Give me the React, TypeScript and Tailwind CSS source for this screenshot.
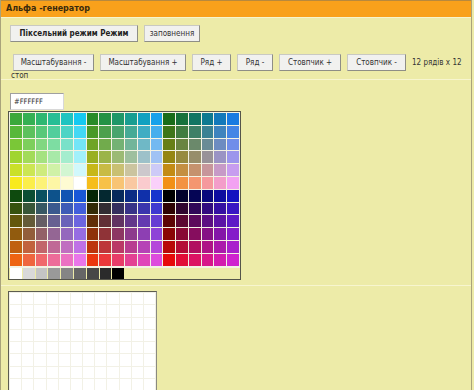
import React from "react";

const levels = [0, 0x33, 0x66, 0x99, 0xcc, 0xff];

function tone(r: number, g0: number, b: number) {
  const greenness = Math.max(0, g0 - Math.max(r, b)) / 255;
  const blueness = Math.max(0, b - g0) / 255;
  const g = g0 - 0.18 * g0 * (1 - Math.min(r, b) / 255) * (1 - 0.6 * (r / 255));
  const L = 0.299 * r + 0.587 * g + 0.114 * b + 30 * blueness * (1 - r / 255);
  const k = 0.86 - 0.34 * greenness - 0.18 * blueness;
  const f = (c: number) => Math.round(Math.max(0, Math.min(255, L + k * (c - L))));
  return `rgb(${f(r)},${f(g)},${f(b)})`;
}

const palette: string[] = [];
for (let r = 0; r < 12; r++) {
  for (let c = 0; c < 18; c++) {
    const block = Math.floor(c / 6);
    const gi = r < 6 ? 5 - block : 2 - block;
    palette.push(tone(levels[r % 6], levels[gi], levels[c % 6]));
  }
}

const grays = ["#ffffff", "#d9d9d9", "#c4c4c4", "#999999", "#858585", "#666666", "#474747", "#2b2b2b", "#000000"];

function Btn({ w, children, bold }: { w: string; children: React.ReactNode; bold?: boolean }) {
  return (
    <button
      style={{ width: w }}
      className={
        bold
          ? "h-[17px] shrink-0 bg-[#f1f1ef] border border-[#c9c9c2] border-r-[#8e8e86] border-b-[#8e8e86] text-[8px] font-bold text-[#222] leading-none"
          : "h-[17px] shrink-0 bg-[#f1f1ef] border border-[#c9c9c2] border-r-[#8e8e86] border-b-[#8e8e86] text-[8px] text-[#333] leading-none"
      }
    >
      {children}
    </button>
  );
}

export default function App() {
  return (
    <div className="w-[474px] h-[390px] overflow-hidden bg-[#edeba8] font-['DejaVu_Sans_Condensed','DejaVu_Sans',Verdana,sans-serif]">
      <div className="w-[472px] h-[390px] border-x border-[#a9a37b]">
        <div className="h-[17px] bg-[#f9a11b] border-t border-[#b8893d] pl-[5px] font-['DejaVu_Sans',Verdana,sans-serif] text-[8px] font-bold leading-[15px] text-[#3a2a0c]">
          Альфа -генератор
        </div>
        <div className="border-t border-[#f7f5cf] h-[62px] pl-[9px] pt-[7px]">
          <div className="flex gap-[6px]">
            <Btn w="128px" bold>
              Піксельний режим Режим
            </Btn>
            <Btn w="56px">заповнення</Btn>
          </div>
          <div className="flex items-baseline gap-[6px] mt-[12px] ml-[3px]">
            <Btn w="81px">Масштабування -</Btn>
            <Btn w="86px">Масштабування +</Btn>
            <Btn w="39px">Ряд +</Btn>
            <Btn w="36px">Ряд -</Btn>
            <Btn w="62px">Стовпчик +</Btn>
            <Btn w="59px">Стовпчик -</Btn>
            <span className="text-[8px] text-[#333] whitespace-nowrap">12 рядів x 12</span>
          </div>
          <div className="text-[8px] leading-[9px] text-[#333] ml-[1px]">стоп</div>
        </div>
        <div className="border-t border-[#f7f5cf] h-[206px] pl-[7px] pt-[13px]">
          <div className="ml-[2px] w-[54px] h-[17px] bg-white border border-[#a0a0a0] border-r-[#d8d8d8] border-b-[#d8d8d8] text-[7.5px] leading-[15px] pl-[3px] text-[#333]">
            #FFFFFF
          </div>
          <div className="mt-px w-[233px] h-[169px] border border-[#55554a] bg-[#edeba8] flex flex-col">
            <div className="grid grid-cols-18 gap-px bg-[#f3f2e4] p-px">
              {palette.map((c, i) => (
                <div key={i} className="h-[11.8px]" style={{ backgroundColor: c }} />
              ))}
            </div>
            <div className="flex gap-px px-px border-t border-[#f3f2e4]">
              {grays.map((c, i) => (
                <div key={i} className="w-[11.8px] h-[11.8px]" style={{ backgroundColor: c }} />
              ))}
            </div>
          </div>
        </div>
        <div className="border-t border-[#f7f5cf] pl-[7px] pt-[5px]">
          <div className="w-[149px] border border-[#5c5c50] border-r-[#8a8a80] bg-[#f2f1e6] grid grid-cols-12 gap-px p-px">
            {Array.from({ length: 144 }).map((_, i) => (
              <div key={i} className="h-[11.3px] bg-white" />
            ))}
          </div>
        </div>
      </div>
    </div>
  );
}
